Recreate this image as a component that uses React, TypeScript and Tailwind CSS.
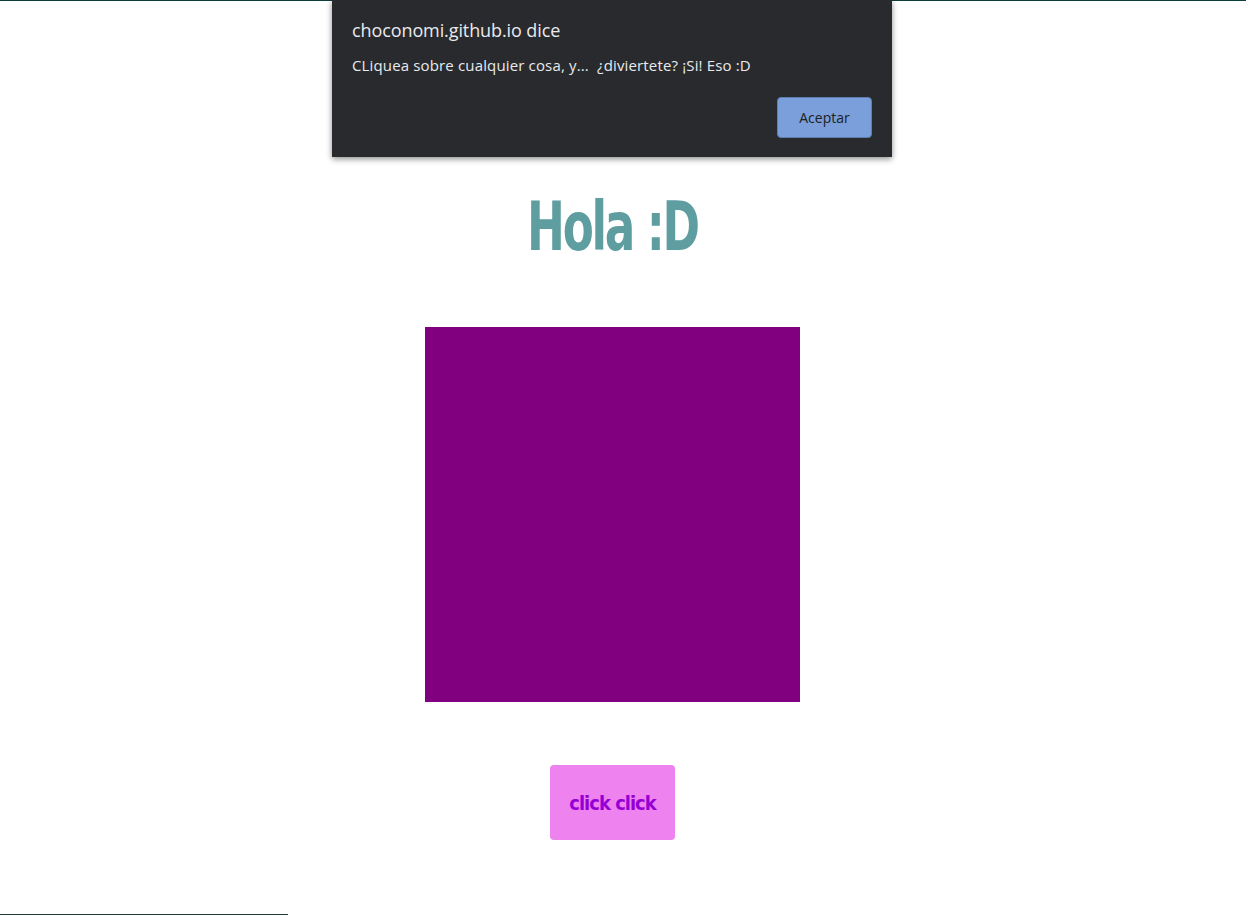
import React from 'react';

const impact = { fontFamily: '"DejaVu Sans", "Liberation Sans", sans-serif' };

const AlertDialog: React.FC = () => {
    return (
        <div
            className="absolute left-[332px] top-0 w-[560px] h-[157px] bg-[#292a2d] shadow-[0_2px_6px_rgba(0,0,0,0.45)] px-5 pt-[18px] flex flex-col"
            style={{ fontFamily: '"Open Sans", "Noto Sans", sans-serif' }}
        >
            <div className="text-[18px] leading-6 text-[#e8eaed] tracking-[-0.1px]">choconomi.github.io dice</div>
            <div className="mt-[13px] text-[15px] leading-5 text-[#e8eaed] whitespace-pre tracking-[0.15px]">CLiquea sobre cualquier cosa, y...  ¿diviertete? ¡Si! Eso :D</div>
            <div className="flex justify-end mt-[22px]">
                <button className="w-[95px] h-[41px] rounded-[4px] bg-[#7a9fda] border border-[#5f7fb3] text-[14px] text-[#202124]">
                    Aceptar
                </button>
            </div>
        </div>
    );
};

export default function App() {
    return (
        <div className="relative w-[1246px] h-[916px] bg-white overflow-hidden">
            {/* top rule */}
            <div className="h-px w-full bg-[#0b3d3d]" />

            <div className="w-[1225px] flex flex-col items-center">
                <h1
                    className="mt-[186px] text-[68px] leading-[80px] font-extrabold font-stretch-condensed text-[#5f9ea0] tracking-[-3px] scale-x-[0.74]"
                    style={impact}
                >
                    Hola :D
                </h1>

                <div className="mt-[60px] w-[375px] h-[375px] bg-[#800080]" />

                <button
                    className="mt-[63px] w-[125px] h-[75px] rounded-[4px] bg-[#ee82ee] text-[20px] font-extrabold font-stretch-condensed text-[#9400d3] tracking-[-1px]"
                    style={impact}
                >
                    click click
                </button>
            </div>

            {/* bottom rule */}
            <div className="absolute left-0 top-[914px] w-[288px] h-px bg-[#1f3b3b]" />

            <AlertDialog />
        </div>
    );
}
